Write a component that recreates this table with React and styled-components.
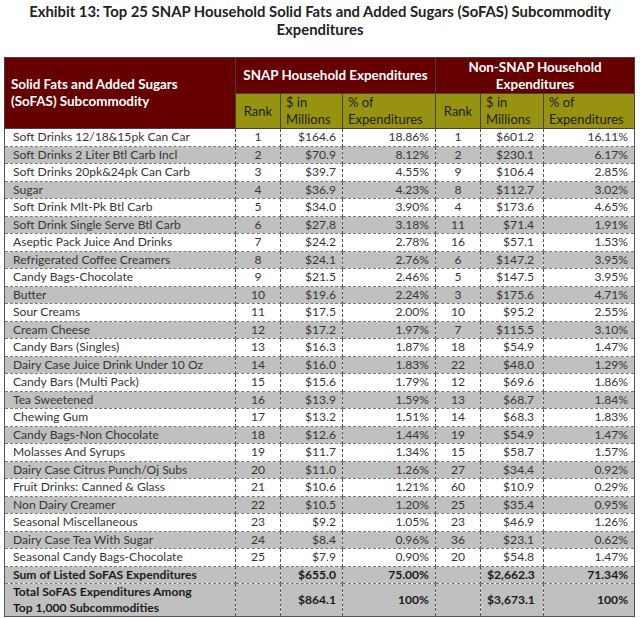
import React from "react";
import styled, { createGlobalStyle } from "styled-components";

const Global = createGlobalStyle`
  html, body { margin: 0; padding: 0; background: #fff; }
  body { font-family: Lato, "Open Sans", sans-serif; }
`;

const Page = styled.div`
  width: 640px;
  height: 618px;
  overflow: hidden;
  padding: 2px 0 0 4px;
  box-sizing: border-box;
`;

const Title = styled.h1`
  margin: 0 0 19px -4px;
  width: 640px;
  text-align: center;
  font-family: Lato, sans-serif;
  font-weight: 700;
  font-size: 14.85px;
  line-height: 18px;
  color: #222;
`;

const Table = styled.table`
  border-collapse: collapse;
  table-layout: fixed;
  width: 630px;
  font-family: Lato, sans-serif;
  font-size: 12.1px;
  color: #333;
  border: 1px solid #555;
`;

const HeadCell = styled.th`
  background: ${p => (p.$olive ? "#979310" : "#660000")};
  color: ${p => (p.$olive ? "#1e1e1e" : "#fff")};
  font-weight: ${p => (p.$olive ? 400 : 700)};
  font-size: ${p => (p.$olive ? "13px" : "13.4px")};
  line-height: 17px;
  text-align: ${p => p.$align || "center"};
  vertical-align: middle;
  padding: 0 ${p => (p.$olive ? "5px" : "6px")};
  height: ${p => p.$h || 34}px;
  border: 1px solid #444;
  box-sizing: border-box;
`;

const Row = styled.tr`
  background: ${p => (p.$gray ? "#c0c0c0" : "#fff")};
  height: ${p => p.$h || 17.5}px;
  font-weight: ${p => (p.$bold ? 700 : 400)};
  color: ${p => (p.$bold ? "#1a1a1a" : "#363636")};
`;

const Cell = styled.td`
  text-align: ${p => p.$align || "left"};
  padding: 0 ${p => p.$pr || 6}px 0 ${p => p.$pl || 6}px;
  border-left: 1px dashed #555;
  border-right: 1px dashed #555;
  border-bottom: 1px dashed #777;
  line-height: 16px;
  white-space: nowrap;
  overflow: hidden;
  box-sizing: border-box;
`;

const rows = [
  ["Soft Drinks 12/18&15pk Can Car", 1, "$164.6", "18.86%", 1, "$601.2", "16.11%"],
  ["Soft Drinks 2 Liter Btl Carb Incl", 2, "$70.9", "8.12%", 2, "$230.1", "6.17%"],
  ["Soft Drinks 20pk&24pk Can Carb", 3, "$39.7", "4.55%", 9, "$106.4", "2.85%"],
  ["Sugar", 4, "$36.9", "4.23%", 8, "$112.7", "3.02%"],
  ["Soft Drink Mlt-Pk Btl Carb", 5, "$34.0", "3.90%", 4, "$173.6", "4.65%"],
  ["Soft Drink Single Serve Btl Carb", 6, "$27.8", "3.18%", 11, "$71.4", "1.91%"],
  ["Aseptic Pack Juice And Drinks", 7, "$24.2", "2.78%", 16, "$57.1", "1.53%"],
  ["Refrigerated Coffee Creamers", 8, "$24.1", "2.76%", 6, "$147.2", "3.95%"],
  ["Candy Bags-Chocolate", 9, "$21.5", "2.46%", 5, "$147.5", "3.95%"],
  ["Butter", 10, "$19.6", "2.24%", 3, "$175.6", "4.71%"],
  ["Sour Creams", 11, "$17.5", "2.00%", 10, "$95.2", "2.55%"],
  ["Cream Cheese", 12, "$17.2", "1.97%", 7, "$115.5", "3.10%"],
  ["Candy Bars (Singles)", 13, "$16.3", "1.87%", 18, "$54.9", "1.47%"],
  ["Dairy Case Juice Drink Under 10 Oz", 14, "$16.0", "1.83%", 22, "$48.0", "1.29%"],
  ["Candy Bars (Multi Pack)", 15, "$15.6", "1.79%", 12, "$69.6", "1.86%"],
  ["Tea Sweetened", 16, "$13.9", "1.59%", 13, "$68.7", "1.84%"],
  ["Chewing Gum", 17, "$13.2", "1.51%", 14, "$68.3", "1.83%"],
  ["Candy Bags-Non Chocolate", 18, "$12.6", "1.44%", 19, "$54.9", "1.47%"],
  ["Molasses And Syrups", 19, "$11.7", "1.34%", 15, "$58.7", "1.57%"],
  ["Dairy Case Citrus Punch/Oj Subs", 20, "$11.0", "1.26%", 27, "$34.4", "0.92%"],
  ["Fruit Drinks: Canned & Glass", 21, "$10.6", "1.21%", 60, "$10.9", "0.29%"],
  ["Non Dairy Creamer", 22, "$10.5", "1.20%", 25, "$35.4", "0.95%"],
  ["Seasonal Miscellaneous", 23, "$9.2", "1.05%", 23, "$46.9", "1.26%"],
  ["Dairy Case Tea With Sugar", 24, "$8.4", "0.96%", 36, "$23.1", "0.62%"],
  ["Seasonal Candy Bags-Chocolate", 25, "$7.9", "0.90%", 20, "$54.8", "1.47%"],
];

const widths = [231, 45, 62, 93, 45, 63, 91];

function DataRow({ r, gray }) {
  return (
    <Row $gray={gray}>
      <Cell $pl={8}>{r[0]}</Cell>
      <Cell $align="center">{r[1]}</Cell>
      <Cell $align="right">{r[2]}</Cell>
      <Cell $align="right">{r[3]}</Cell>
      <Cell $align="center">{r[4]}</Cell>
      <Cell $align="right" $pr={9}>{r[5]}</Cell>
      <Cell $align="right">{r[6]}</Cell>
    </Row>
  );
}

export default function App() {
  return (
    <Page>
      <Global />
      <Title>
        Exhibit 13: Top 25 SNAP Household Solid Fats and Added Sugars (SoFAS) Subcommodity
        <br />
        Expenditures
      </Title>
      <Table>
        <colgroup>
          {widths.map((w, i) => (
            <col key={i} style={{ width: w }} />
          ))}
        </colgroup>
        <thead>
          <tr>
            <HeadCell rowSpan={2} $align="left" $h={36}>
              Solid Fats and Added Sugars
              <br />
              (SoFAS) Subcommodity
            </HeadCell>
            <HeadCell colSpan={3} $h={36}>SNAP Household Expenditures</HeadCell>
            <HeadCell colSpan={3} $h={36}>
              Non-SNAP Household
              <br />
              Expenditures
            </HeadCell>
          </tr>
          <tr>
            <HeadCell $olive>Rank</HeadCell>
            <HeadCell $olive $align="left">$ in<br />Millions</HeadCell>
            <HeadCell $olive $align="left">% of<br />Expenditures</HeadCell>
            <HeadCell $olive>Rank</HeadCell>
            <HeadCell $olive $align="left">$ in<br />Millions</HeadCell>
            <HeadCell $olive $align="left">% of<br />Expenditures</HeadCell>
          </tr>
        </thead>
        <tbody>
          {rows.map((r, i) => (
            <DataRow key={i} r={r} gray={i % 2 === 1} />
          ))}
          <Row $gray $bold>
            <Cell $pl={8}>Sum of Listed SoFAS Expenditures</Cell>
            <Cell />
            <Cell $align="right">$655.0</Cell>
            <Cell $align="right">75.00%</Cell>
            <Cell />
            <Cell $align="right" $pr={9}>$2,662.3</Cell>
            <Cell $align="right">71.34%</Cell>
          </Row>
          <Row $gray $bold $h={33}>
            <Cell $pl={8}>
              Total SoFAS Expenditures Among
              <br />
              Top 1,000 Subcommodities
            </Cell>
            <Cell />
            <Cell $align="right">$864.1</Cell>
            <Cell $align="right">100%</Cell>
            <Cell />
            <Cell $align="right" $pr={9}>$3,673.1</Cell>
            <Cell $align="right">100%</Cell>
          </Row>
        </tbody>
      </Table>
    </Page>
  );
}
